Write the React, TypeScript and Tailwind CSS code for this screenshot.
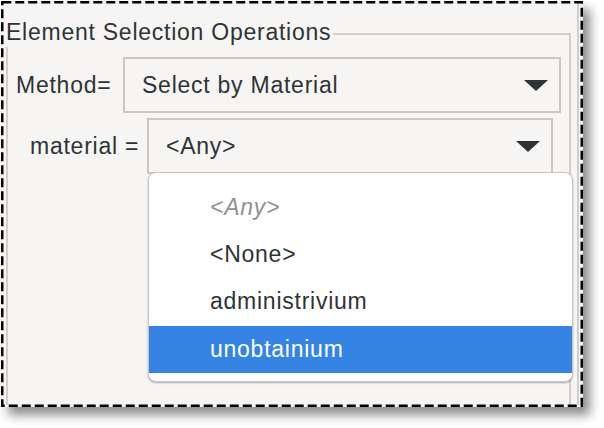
import React from 'react'

const font = { fontFamily: '"Liberation Sans", Arial, Helvetica, sans-serif' }
const ink = 'text-[#2e3436]'

function Caret() {
  return (
    <svg width="24" height="11" viewBox="0 0 24 11" className="shrink-0">
      <polygon points="0,0 24,0 12,11" fill="#2e3436" />
    </svg>
  )
}

// dashed selection outline drawn over the window edge
function DashedOutline() {
  return (
    <svg className="absolute inset-0 pointer-events-none" width="582" height="406" viewBox="0 0 582 406">
      <rect x="1.25" y="1.25" width="579.5" height="403.5" fill="none" stroke="#000" strokeWidth="2.5" strokeDasharray="9 4" />
    </svg>
  )
}

const items = [
  { label: '<Any>', muted: true },
  { label: '<None>' },
  { label: 'administrivium' },
  { label: 'unobtainium', selected: true },
]

export default function App() {
  return (
    <div className="w-[604px] h-[428px] bg-white pl-px pt-px overflow-hidden text-[23px] tracking-[0.75px]" style={font}>
      <div className="relative w-[582px] h-[406px] p-[2px] bg-[#f6f5f4] shadow-[7px_8px_10px_rgba(0,0,0,0.45)] flex">
        <div className="w-[576px] h-full border-r-2 border-[#d3cec9] pl-[3px] pr-[6px] pt-[16px] flex flex-col">
          {/* legend row */}
          <div className="flex items-start h-[28px]">
            <span className={`${ink} leading-[28px] whitespace-nowrap -mt-px`}>Element Selection Operations</span>
            <div className="flex-1 h-[14px] mt-[14px] ml-[2px] border-t-2 border-r-2 border-[#d3cec9]" />
          </div>

          <div className="flex-1 border-l-2 border-r-2 border-[#d3cec9] pt-[10px]">
            <div className="flex items-center">
              <span className={`${ink} w-[115px] pl-[8px] whitespace-nowrap`}>Method=</span>
              <div className="w-[438px] h-[56px] border-2 border-[#cdc7c2] flex items-center justify-between pl-[17px] pr-[11px]">
                <span className={ink}>Select by Material</span>
                <Caret />
              </div>
            </div>

            <div className="flex items-center mt-[5px]">
              <span className={`${ink} w-[139px] pl-[22px] whitespace-nowrap`}>material =</span>
              <div className="relative w-[406px] h-[56px] border-2 border-[#cdc7c2] flex items-center justify-between pl-[17px] pr-[11px]">
                <span className={ink}>&lt;Any&gt;</span>
                <Caret />

                <div className="absolute left-[-1px] top-[52px] w-[425px] h-[210px] bg-white border border-[#c9c5c1] rounded-[8px] shadow-[0_1px_2px_rgba(0,0,0,0.3)] pt-[11px] overflow-hidden">
                  {items.map((it) => (
                    <div
                      key={it.label}
                      className={`h-[47px] flex items-center pl-[61px] ${
                        it.selected ? 'bg-[#3584e4] text-white mt-px' : it.muted ? 'italic text-[#929292]' : ink
                      }`}
                    >
                      {it.label}
                    </div>
                  ))}
                </div>
              </div>
            </div>
          </div>
        </div>
        <DashedOutline />
      </div>
    </div>
  )
}
